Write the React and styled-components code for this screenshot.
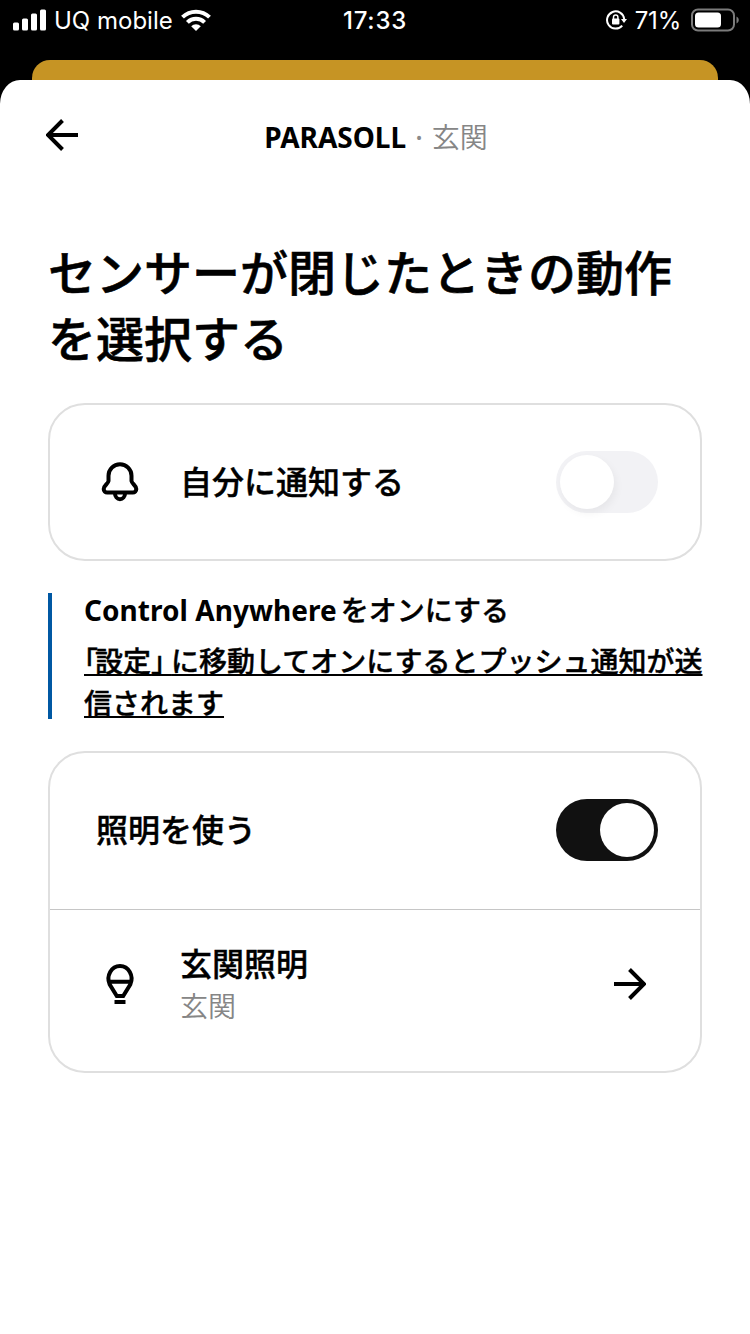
import styled, { createGlobalStyle } from "styled-components";
import { useState } from "react";

const GlobalStyle = createGlobalStyle`
*{
box-sizing:border-box;
}
body{
margin:0;
background-color:#000;
color:#000;
font-family:"Noto Sans","Noto Sans CJK JP",sans-serif;
}
`
const Screen = styled.div`
width:750px;
height:1334px;
display:flex;
flex-direction:column;
overflow:hidden;
background-color:#000;
`
const StatusBar = styled.div`
height:60px;
padding:1px 11px 19px 13px;
display:grid;
grid-template-columns:1fr auto 1fr;
align-items:center;
color:#fff;
font-family:Inter,sans-serif;
font-size:24px;
line-height:40px;
`
const StatusGroup = styled.div`
display:flex;
align-items:center;
justify-content:${props => props.align === "right" ? "flex-end" : "flex-start"};
`
const StatusIcon = styled.svg`
flex:none;
margin-bottom:2px;
`
const Carrier = styled.span`
margin:0 8px 0 8px;
`
const Time = styled.span`
font-weight:500;
letter-spacing:0.8px;
margin-right:2px;
`
const Battery = styled.span`
margin:0 10px 0 8px;
letter-spacing:-0.2px;
`
const BackSheet = styled.div`
flex:none;
height:20px;
margin:0 32px;
background-color:#c69424;
border-radius:18px 18px 0 0;
`
const Sheet = styled.div`
flex:1;
padding:0 48px;
background-color:#fff;
border-radius:20px 20px 0 0 / 24px 24px 0 0;
`
const Header = styled.div`
height:110px;
display:grid;
grid-template-columns:32px 1fr 32px;
align-items:center;
margin:0 -2px;
`
const IconButton = styled.button`
width:32px;
height:32px;
margin-right:${props => props.$inset || 0}px;
padding:0;
border:none;
background:none;
display:flex;
cursor:pointer;
`
const HeaderTitle = styled.div`
display:flex;
justify-content:center;
align-items:baseline;
font-size:28px;
line-height:40px;
font-weight:700;
padding:4px 0 0 2px;
`
const Dot = styled.span`
margin:0 9px 0 9px;
color:#8a8a8a;
font-weight:500;
`
const Room = styled.span`
color:#868686;
font-weight:350;
`
const Title = styled.h1`
margin:50px 0 0;
font-size:48px;
line-height:66px;
font-weight:500;
-webkit-text-stroke:0.6px #000;
`
const Card = styled.div`
border:2px solid #dfdfdf;
border-radius:37px;
`
const NotifyCard = styled(Card)`
margin-top:31px;
`
const LightCard = styled(Card)`
margin-top:32px;
height:322px;
`
const Row = styled.div`
height:${props => props.height}px;
padding:0 42px 0 46px;
display:flex;
align-items:center;
border-bottom:${props => props.divider ? "1px solid #c6c6c6" : "none"};
`
const SwitchRow = styled(Row)`
padding-bottom:2px;
`
const RowIcon = styled.svg`
width:48px;
height:48px;
margin-right:36px;
flex:none;
`
const RowText = styled.div`
flex:1;
`
const Label = styled.div`
font-size:32px;
line-height:44px;
font-weight:500;
-webkit-text-stroke:0.4px #000;
`
const SubLabel = styled.div`
font-size:28px;
line-height:40px;
font-weight:350;
color:#868686;
`
const Toggle = styled.button`
width:102px;
height:62px;
padding:4px;
border:none;
border-radius:31px;
display:flex;
justify-content:${props => props.$on ? "flex-end" : "flex-start"};
background-color:${props => props.$on ? "#111" : "#f2f2f5"};
cursor:pointer;
`
const Knob = styled.span`
width:54px;
height:54px;
border-radius:50%;
background-color:#fff;
box-shadow:${props => props.$on ? "none" : "2px 4px 8px rgba(0,0,0,0.05)"};
`
const Notice = styled.div`
margin-top:32px;
height:126px;
padding-left:32px;
border-left:4px solid #0058a3;
font-size:28px;
font-weight:500;
-webkit-text-stroke:0.4px #000;
white-space:nowrap;
`
const NoticeTitle = styled.div`
line-height:35px;
`
const Latin = styled.span`
margin-right:4px;
font-weight:700;
letter-spacing:0.04px;
-webkit-text-stroke:0;
`
const NoticeLink = styled.a`
display:block;
margin-top:12px;
line-height:42px;
color:#000;
text-decoration:underline;
text-decoration-thickness:2px;
text-underline-offset:2px;
text-spacing-trim:space-all;
cursor:pointer;
`
const Bracket = styled.span`
font-feature-settings:"halt";
letter-spacing:${props => props.space}px;
`
const Arrow = ({ flip }) => (
    <svg width="32" height="32" viewBox="0 0 32 32" fill="none" stroke="#000" strokeWidth="4">
        <path d={flip ? "M0 16H29M15.5 1.5L30 16L15.5 30.5" : "M32 16H3M16.5 1.5L2 16L16.5 30.5"} />
    </svg>
)

const Switch = ({ on, onClick }) => (
    <Toggle $on={on} onClick={onClick}>
        <Knob $on={on} />
    </Toggle>
)

const App = () => {
    const [notify, setNotify] = useState(false);
    const [light, setLight] = useState(true);

    return (
        <>
            <GlobalStyle />
            <Screen>
                <StatusBar>
                    <StatusGroup>
                        <StatusIcon width="33" height="22" viewBox="0 0 33 22" fill="#fff">
                            <rect x="0" y="13.5" width="6" height="8" rx="1.5" />
                            <rect x="9" y="9.5" width="6" height="12" rx="1.5" />
                            <rect x="18" y="4.5" width="6" height="17" rx="1.5" />
                            <rect x="27" y="0.5" width="6" height="21" rx="1.5" />
                        </StatusIcon>
                        <Carrier>UQ mobile</Carrier>
                        <StatusIcon width="30" height="22" viewBox="0 0 30 22" fill="none" stroke="#fff" strokeWidth="4">
                            <path d="M1.5 8.2A19.2 19.2 0 0 1 28.5 8.2" />
                            <path d="M6.4 13.3A12.2 12.2 0 0 1 23.6 13.3" />
                            <path d="M15 22L10.2 17.2A6.8 6.8 0 0 1 19.8 17.2Z" fill="#fff" stroke="none" />
                        </StatusIcon>
                    </StatusGroup>
                    <Time>17:33</Time>
                    <StatusGroup align="right">
                        <StatusIcon width="21" height="20" viewBox="0 0 21 20" fill="none" stroke="#fff" strokeWidth="2">
                            <path d="M16.2 15.6A8.6 8.6 0 1 1 18.2 9" />
                            <path d="M15 9H21L18 13Z" fill="#fff" stroke="none" />
                            <rect x="6" y="8.6" width="7.4" height="6" rx="1" fill="#fff" stroke="none" />
                            <path d="M7.5 9V7.3A2.2 2.2 0 0 1 11.9 7.3V9" strokeWidth="1.5" />
                        </StatusIcon>
                        <Battery>71%</Battery>
                        <StatusIcon width="48" height="24" viewBox="0 0 48 24" fill="none">
                            <rect x="1" y="1.5" width="42" height="21" rx="6" stroke="#7b7b7b" strokeWidth="2" />
                            <rect x="4" y="4.5" width="26" height="15" rx="3.5" fill="#fff" />
                            <path d="M45.5 8.5C48.5 10 48.5 14 45.5 15.5Z" fill="#7b7b7b" />
                        </StatusIcon>
                    </StatusGroup>
                </StatusBar>
                <BackSheet />
                <Sheet>
                    <Header>
                        <IconButton>
                            <Arrow />
                        </IconButton>
                        <HeaderTitle>
                            PARASOLL<Dot>·</Dot><Room>玄関</Room>
                        </HeaderTitle>
                    </Header>
                    <Title>センサーが閉じたときの動作<br />を選択する</Title>
                    <NotifyCard>
                        <Row height={154}>
                            <RowIcon viewBox="0 0 48 48" fill="none" stroke="#000" strokeWidth="4">
                                <path d="M12.5 17.7A11.5 11.5 0 0 1 35.5 17.7V23C36 26 40.3 27.5 40.3 31C40.3 33.1 38.8 34.5 36.8 34.5H11.2C9.2 34.5 7.7 33.1 7.7 31C7.7 27.5 12 26 12.5 23Z" />
                                <path d="M19 35.5A5 5.7 0 0 0 29 35.5" />
                            </RowIcon>
                            <RowText>
                                <Label>自分に通知する</Label>
                            </RowText>
                            <Switch on={notify} onClick={() => setNotify(!notify)} />
                        </Row>
                    </NotifyCard>
                    <Notice>
                        <NoticeTitle><Latin>Control Anywhere</Latin>をオンにする</NoticeTitle>
                        <NoticeLink>
                            <Bracket space={-3}>「</Bracket>設定<Bracket space={6}>」</Bracket>に移動してオンにするとプッシュ通知が送<br />信されます
                        </NoticeLink>
                    </Notice>
                    <LightCard>
                        <SwitchRow height={157} divider>
                            <RowText>
                                <Label>照明を使う</Label>
                            </RowText>
                            <Switch on={light} onClick={() => setLight(!light)} />
                        </SwitchRow>
                        <Row height={148}>
                            <RowIcon viewBox="0 0 48 48" fill="none" stroke="#000" strokeWidth="4">
                                <path d="M20.8 36H27.2L34.4 24.2C38 16 32.7 6 24 6S10 16 13.6 24.2ZM12.5 21.8H35.5" />
                                <path d="M18.5 42H29.5" />
                            </RowIcon>
                            <RowText>
                                <Label>玄関照明</Label>
                                <SubLabel>玄関</SubLabel>
                            </RowText>
                            <IconButton $inset={12}>
                                <Arrow flip />
                            </IconButton>
                        </Row>
                    </LightCard>
                </Sheet>
            </Screen>
        </>
    )
}

export default App
